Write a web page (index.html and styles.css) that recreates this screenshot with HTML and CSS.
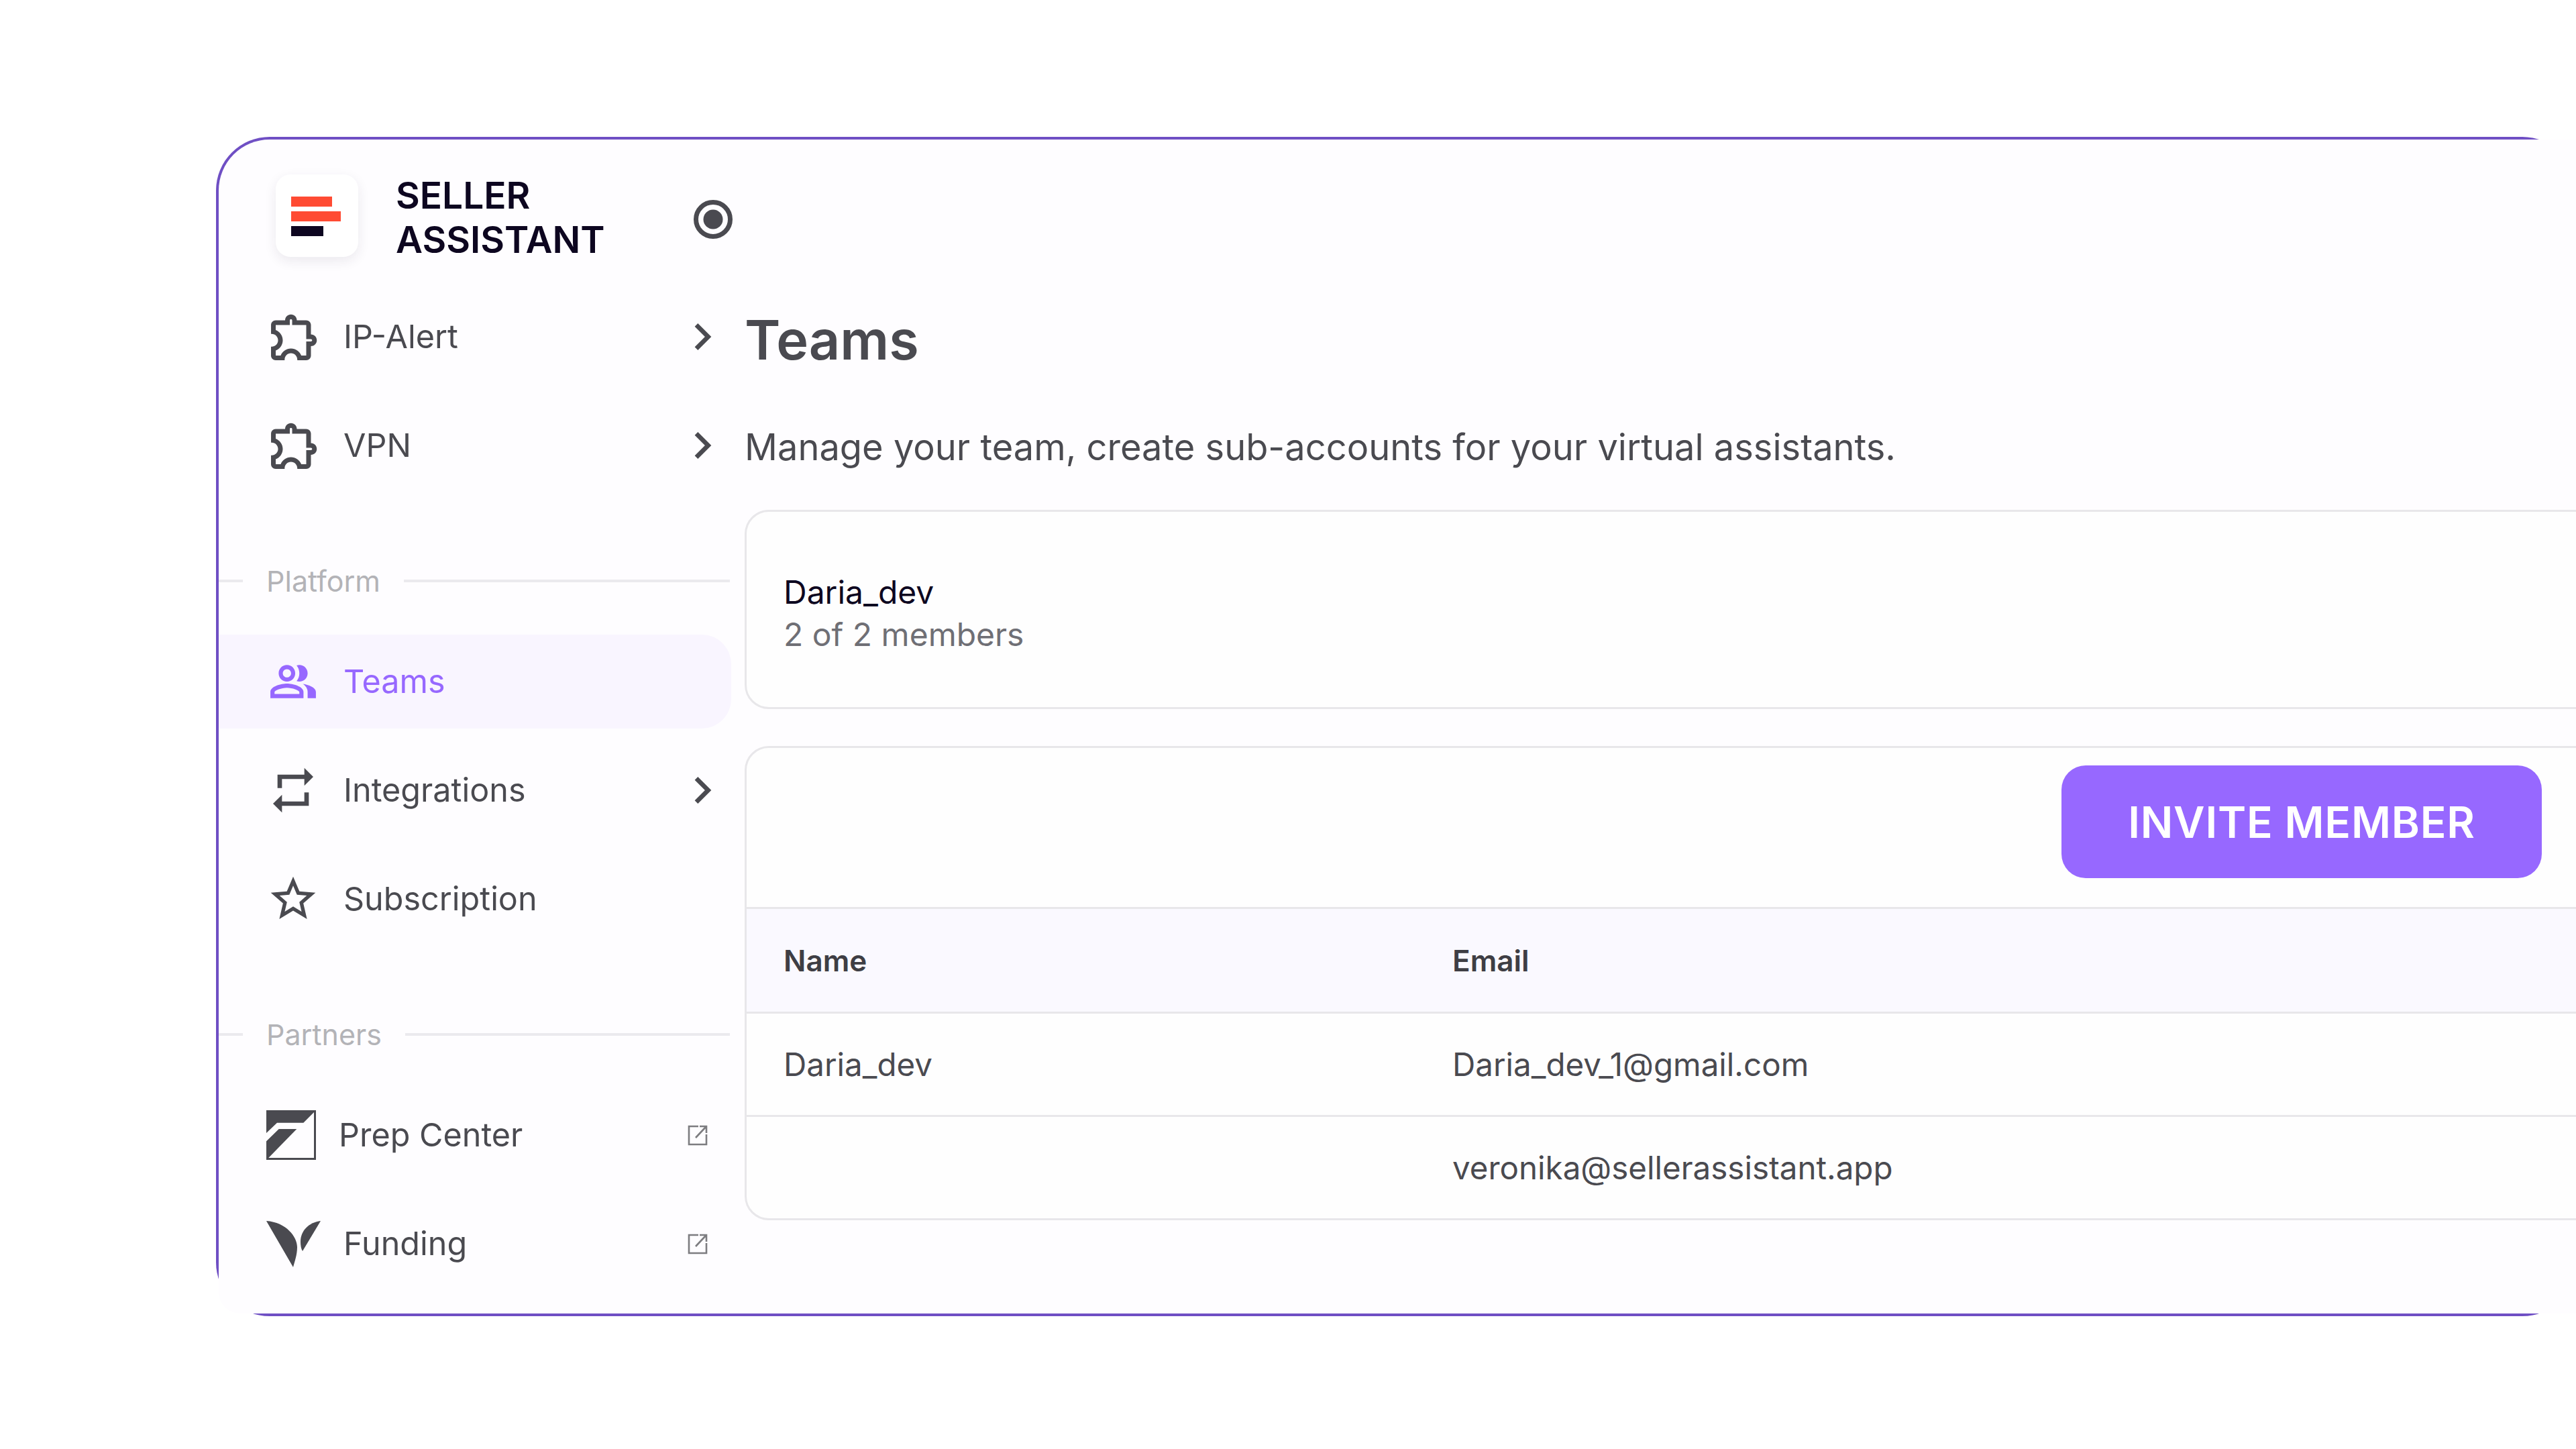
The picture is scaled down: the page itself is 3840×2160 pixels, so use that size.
FILE: index.html
```html
<!DOCTYPE html>
<html lang="en">
<head>
<meta charset="utf-8">
<title>Teams</title>
<link rel="stylesheet" href="styles.css">
</head>
<body>
<div class="frame">
  <div class="panel">
    <aside class="sidebar">
      <div class="brand">
        <div class="logo"><span class="bar bar-a"></span><span class="bar bar-b"></span><span class="bar bar-c"></span></div>
        <div class="brand-name">SELLER<br>ASSISTANT</div>
        <svg class="radio" viewBox="0 0 58 58"><circle cx="29" cy="29" r="25.5" fill="none" stroke="#4a4a50" stroke-width="7"/><circle cx="29" cy="29" r="14.5" fill="#4a4a50"/></svg>
      </div>
      <nav class="group">
        <a class="item"><span class="slot"><svg class="ic ic-puzzle" viewBox="0 0 24 24"><path d="M10.5 4.5c.28 0 .5.22.5.5v2h6v6h2c.28 0 .5.22.5.5s-.22.5-.5.5h-2v6h-2.12c-.68-1.75-2.39-3-4.38-3s-3.7 1.25-4.38 3H4v-2.12c1.75-.68 3-2.39 3-4.38 0-1.99-1.24-3.7-2.99-4.38L4 7h6V5c0-.28.22-.5.5-.5m0-2C9.12 2.5 8 3.62 8 5H4c-1.1 0-1.99.9-1.99 2v3.8h.29c1.49 0 2.7 1.21 2.7 2.7s-1.21 2.7-2.7 2.7H2V20c0 1.1.9 2 2 2h3.8v-.3c0-1.49 1.21-2.7 2.7-2.7s2.7 1.21 2.7 2.7v.3H17c1.1 0 2-.9 2-2v-4c1.38 0 2.5-1.12 2.5-2.5S20.38 11 19 11V7c0-1.1-.9-2-2-2h-4c0-1.38-1.12-2.5-2.5-2.5z"/></svg></span><span class="label">IP-Alert</span><svg class="chev" viewBox="0 0 24 24"><path d="M10 6 8.59 7.41 13.17 12l-4.58 4.59L10 18l6-6z"/></svg></a>
        <a class="item"><span class="slot"><svg class="ic ic-puzzle" viewBox="0 0 24 24"><path d="M10.5 4.5c.28 0 .5.22.5.5v2h6v6h2c.28 0 .5.22.5.5s-.22.5-.5.5h-2v6h-2.12c-.68-1.75-2.39-3-4.38-3s-3.7 1.25-4.38 3H4v-2.12c1.75-.68 3-2.39 3-4.38 0-1.99-1.24-3.7-2.99-4.38L4 7h6V5c0-.28.22-.5.5-.5m0-2C9.12 2.5 8 3.62 8 5H4c-1.1 0-1.99.9-1.99 2v3.8h.29c1.49 0 2.7 1.21 2.7 2.7s-1.21 2.7-2.7 2.7H2V20c0 1.1.9 2 2 2h3.8v-.3c0-1.49 1.21-2.7 2.7-2.7s2.7 1.21 2.7 2.7v.3H17c1.1 0 2-.9 2-2v-4c1.38 0 2.5-1.12 2.5-2.5S20.38 11 19 11V7c0-1.1-.9-2-2-2h-4c0-1.38-1.12-2.5-2.5-2.5z"/></svg></span><span class="label">VPN</span><svg class="chev" viewBox="0 0 24 24"><path d="M10 6 8.59 7.41 13.17 12l-4.58 4.59L10 18l6-6z"/></svg></a>
      </nav>
      <div class="section"><span class="section-name">Platform</span></div>
      <nav class="group">
        <a class="item active"><span class="slot"><svg class="ic ic-people" viewBox="0 0 24 24"><path d="M16.67 13.13C18.04 14.06 19 15.32 19 17v3h4v-3c0-2.18-3.57-3.47-6.33-3.87z"/><path d="M15 12c2.21 0 4-1.79 4-4s-1.79-4-4-4c-.47 0-.91.1-1.33.24C14.5 5.27 15 6.58 15 8s-.5 2.73-1.33 3.76c.42.14.86.24 1.33.24z"/><path d="M9 12c2.21 0 4-1.79 4-4s-1.79-4-4-4-4 1.79-4 4 1.79 4 4 4zm0-6c1.1 0 2 .9 2 2s-.9 2-2 2-2-.9-2-2 .9-2 2-2z"/><path d="M9 13c-2.67 0-8 1.34-8 4v3h16v-3c0-2.66-5.33-4-8-4zm6 5H3v-.99C3.2 16.29 6.3 15 9 15s5.8 1.29 6 2z"/></svg></span><span class="label">Teams</span></a>
        <a class="item"><span class="slot"><svg class="ic" viewBox="0 0 24 24"><path d="M7 7h10v3l4-4-4-4v3H5v6h2V7zm10 10H7v-3l-4 4 4 4v-3h12v-6h-2v4z"/></svg></span><span class="label">Integrations</span><svg class="chev" viewBox="0 0 24 24"><path d="M10 6 8.59 7.41 13.17 12l-4.58 4.59L10 18l6-6z"/></svg></a>
        <a class="item"><span class="slot"><svg class="ic" viewBox="0 0 24 24"><path d="M22 9.24l-7.19-.62L12 2 9.19 8.63 2 9.24l5.46 4.73L5.82 21 12 17.27 18.18 21l-1.63-7.03L22 9.24zM12 15.4l-3.76 2.27 1-4.28-3.32-2.88 4.38-.38L12 6.1l1.71 4.04 4.38.38-3.32 2.88 1 4.28L12 15.4z"/></svg></span><span class="label">Subscription</span></a>
      </nav>
      <div class="section"><span class="section-name">Partners</span></div>
      <nav class="group">
        <a class="item"><span class="slot slot-logo"><svg class="partner-prep" viewBox="0 0 74 74"><rect width="74" height="74" fill="#4a4a50"/><path fill="#fefdff" d="M71 3 55.3 18.7H16L0 34v12.3L18.7 28h26.6L3.3 71H71z"/></svg></span><span class="label label-prep">Prep Center</span><svg class="ext" viewBox="0 0 30 31"><path d="M16 2H2v27h26V14" fill="none" stroke="#7d7d80" stroke-width="2.6"/><path d="M12 19 27 3M18 2h10v10" fill="none" stroke="#7d7d80" stroke-width="2.6"/></svg></a>
        <a class="item"><span class="slot slot-logo"><svg class="partner-fund" viewBox="0 0 81 70"><path fill="#4a4a50" d="M0 1C30 3 46 25 46 40 46 52 42 62 40 70Z"/><path fill="#4a4a50" d="M81 1C64 3 51 15 51 32 51 38 52 43 54 46Z"/></svg></span><span class="label">Funding</span><svg class="ext" viewBox="0 0 30 31"><path d="M16 2H2v27h26V14" fill="none" stroke="#7d7d80" stroke-width="2.6"/><path d="M12 19 27 3M18 2h10v10" fill="none" stroke="#7d7d80" stroke-width="2.6"/></svg></a>
      </nav>
    </aside>
    <main class="main">
      <h1 class="title">Teams</h1>
      <p class="subtitle">Manage your team, create sub-accounts for your virtual assistants.</p>
      <section class="card team-card">
        <div class="team-name">Daria_dev</div>
        <div class="team-count">2 of 2 members</div>
      </section>
      <section class="card members">
        <div class="toolbar"><button class="invite">INVITE MEMBER</button></div>
        <div class="row head"><div>Name</div><div>Email</div></div>
        <div class="row"><div>Daria_dev</div><div>Daria_dev_1@gmail.com</div></div>
        <div class="row last"><div></div><div>veronika@sellerassistant.app</div></div>
      </section>
    </main>
  </div>
</div>
</body>
</html>
```
FILE: styles.css
```css
html, body { margin: 0; padding: 0; background: #fff; width: 3840px; height: 2160px; overflow: hidden; }
body { font-family: Inter, "Liberation Sans", sans-serif; color: #4a4a50; }
.frame { box-sizing: border-box; width: 3518px; height: 1758px; margin: 204px 0 0 322px; padding: 4px 0 4px 4px; background: #6f4fc4; border-radius: 80px; }
.panel { display: flex; gap: 22px; height: 1750px; background: #fefdff; border-radius: 76px 0 0 32px; overflow: hidden; }
.sidebar { flex: 0 0 762px; min-width: 0; display: flex; flex-direction: column; }
.brand { display: flex; align-items: center; height: 123px; margin-top: 52px; margin-bottom: 49px; padding-left: 85px; }
.logo { box-sizing: border-box; flex: 0 0 123px; height: 123px; padding-top: 33px; padding-left: 23px; display: flex; flex-direction: column; gap: 7px; background: #fff; border-radius: 22px; box-shadow: 0 6px 18px rgba(40, 30, 70, .09); }
.bar { display: block; height: 15px; }
.bar-a { width: 61px; background: #ff4b33; }
.bar-b { width: 74px; background: #ff4b33; }
.bar-c { width: 48px; background: #0d0620; }
.brand-name { flex: 0 0 444px; margin-left: 56px; padding-top: 5px; font-size: 55px; line-height: 66px; font-weight: 600; color: #0d0620; }
.radio { flex: 0 0 58px; width: 58px; height: 58px; margin-top: 10px; }
.group { display: flex; flex-direction: column; gap: 22px; }
.item { display: flex; align-items: center; height: 140px; padding-left: 71px; padding-right: 1px; }
.slot { flex: 0 0 84px; height: 84px; display: flex; align-items: center; justify-content: center; margin-right: 31px; }
.ic { width: 80px; height: 80px; flex: none; fill: #4a4a50; margin-left: -4px; }
.ic-puzzle { width: 84px; height: 84px; margin-left: 0; }
.ic-people { width: 74px; height: 74px; fill: #9768ff; }
.label { flex: 1; font-size: 48.5px; line-height: 60px; color: #4a4a50; }
.label-prep { margin-left: -7px; }
.chev { width: 80px; height: 80px; flex: none; fill: #4a4a50; }
.ext { width: 30px; height: 31px; flex: none; margin-right: 32px; }
.slot-logo { justify-content: flex-start; }
.partner-prep { width: 74px; height: 74px; flex: none; }
.partner-fund { width: 81px; height: 70px; flex: none; }
.active { background: #f9f5ff; border-radius: 0 44px 44px 0; width: 692px; }
.active .label { color: #9768ff; }
.section { display: flex; align-items: center; height: 60px; margin-top: 102px; margin-bottom: 50px; font-size: 43px; color: #b3b3b7; }
.section::before { content: ""; flex: 0 0 36px; height: 4px; background: #ebeaee; }
.section::after { content: ""; flex: 1; height: 4px; background: #ebeaee; }
.section-name { padding: 0 35px; }
.main { flex: 1; min-width: 0; padding-top: 249px; }
.title { margin: 0; font-size: 81px; line-height: 100px; font-weight: 600; color: #4a4a50; }
.subtitle { margin: 69px 0 0; font-size: 54.2px; line-height: 80px; color: #4a4a50; white-space: nowrap; }
.card { box-sizing: border-box; width: 2900px; background: #fefefe; border: 3px solid #e8e7ea; border-radius: 36px; font-size: 47.5px; }
.team-card { height: 297px; margin-top: 54px; padding: 10px 0 0 55px; display: flex; flex-direction: column; justify-content: center; line-height: 63px; font-size: 48px; }
.team-name { color: #0d0620; }
.team-count { color: #6f6f75; }
.members { margin-top: 55px; height: 707px; }
.toolbar { box-sizing: border-box; height: 237px; padding-top: 26px; padding-left: 1960px; }
.invite { display: block; width: 716px; height: 168px; padding: 0; border: 0; border-radius: 36px; background: #9768ff; color: #fff; font: 600 64px Inter, "Liberation Sans", sans-serif; letter-spacing: .8px; }
.row { display: grid; grid-template-columns: 997px 1fr; align-items: center; box-sizing: border-box; height: 154px; padding-left: 55px; border-top: 3px solid #e8e7ea; color: #4a4a50; }
.head { height: 156px; background: #faf9ff; font-size: 44px; font-weight: 600; color: #3e3e44; }
.last { height: 154px; }
```
